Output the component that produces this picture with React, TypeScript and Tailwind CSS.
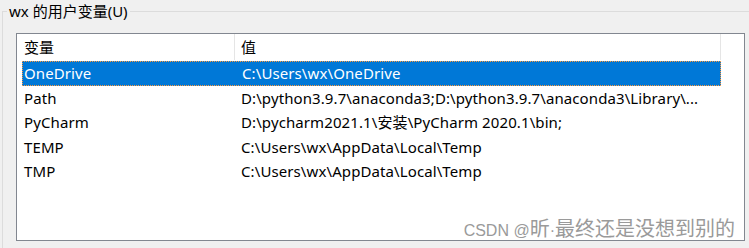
import React from 'react';

const rows = [
  { name: 'OneDrive', value: 'C:\\Users\\wx\\OneDrive' },
  { name: 'Path', value: 'D:\\python3.9.7\\anaconda3;D:\\python3.9.7\\anaconda3\\Library\\...' },
  { name: 'PyCharm', value: 'D:\\pycharm2021.1\\安装\\PyCharm 2020.1\\bin;' },
  { name: 'TEMP', value: 'C:\\Users\\wx\\AppData\\Local\\Temp' },
  { name: 'TMP', value: 'C:\\Users\\wx\\AppData\\Local\\Temp' },
];

const font = "font-['Noto_Sans','Noto_Sans_CJK_SC',sans-serif]";

export default function App() {
  const selected = 0;
  return (
    <div className={`relative w-[749px] h-[248px] overflow-hidden bg-[#f0f0f0] text-[15px] text-black ${font}`}>
      <fieldset className="ml-[2px] h-[260px] border-t border-l border-[#dcdcdc] pl-[13px]">
        <legend className="ml-[-9px] px-[2px] leading-[22px]">wx 的用户变量(U)</legend>

        <div className="mt-[11px] w-[729px] h-[208px] border border-[#828790] bg-white">
          {/* header */}
          <div className="flex h-[26px] items-center leading-none">
            <div className="w-[218px] h-full flex items-center pl-[7px] border-r border-[#e5e5e5]">变量</div>
            <div className="w-[486px] h-full flex items-center pl-[6px] border-r border-[#e5e5e5]">值</div>
          </div>

          <div className="pl-[5px] pt-[1px]">
            {rows.map((r, i) => (
              <div
                key={r.name}
                className={`flex w-[699px] h-[24.5px] items-center whitespace-nowrap tracking-[0.1px] ${
                  i === selected ? 'bg-[#0078d7] text-white border border-dotted border-[#ff9a3c]' : ''
                }`}
              >
                <div className={`w-[217px] ${i === selected ? 'pl-[1px]' : 'pl-[2px]'}`}>{r.name}</div>
                <div className="pl-[2px]">{r.value}</div>
              </div>
            ))}
          </div>
        </div>
      </fieldset>

      <div className="absolute right-[14px] bottom-[9px] flex items-baseline leading-none text-[#9a9a9a] [text-shadow:0_0_1px_#ffffff]">
        <span className="text-[16px] font-['Liberation_Sans',sans-serif]">CSDN @</span>
        <span className="text-[20px] font-['Noto_Sans_CJK_SC',sans-serif]">昕</span>
        <span className="text-[16px] font-['Liberation_Sans',sans-serif]">·</span>
        <span className="text-[20px] font-['Noto_Sans_CJK_SC',sans-serif]">最终还是没想到别的</span>
      </div>
    </div>
  );
}
